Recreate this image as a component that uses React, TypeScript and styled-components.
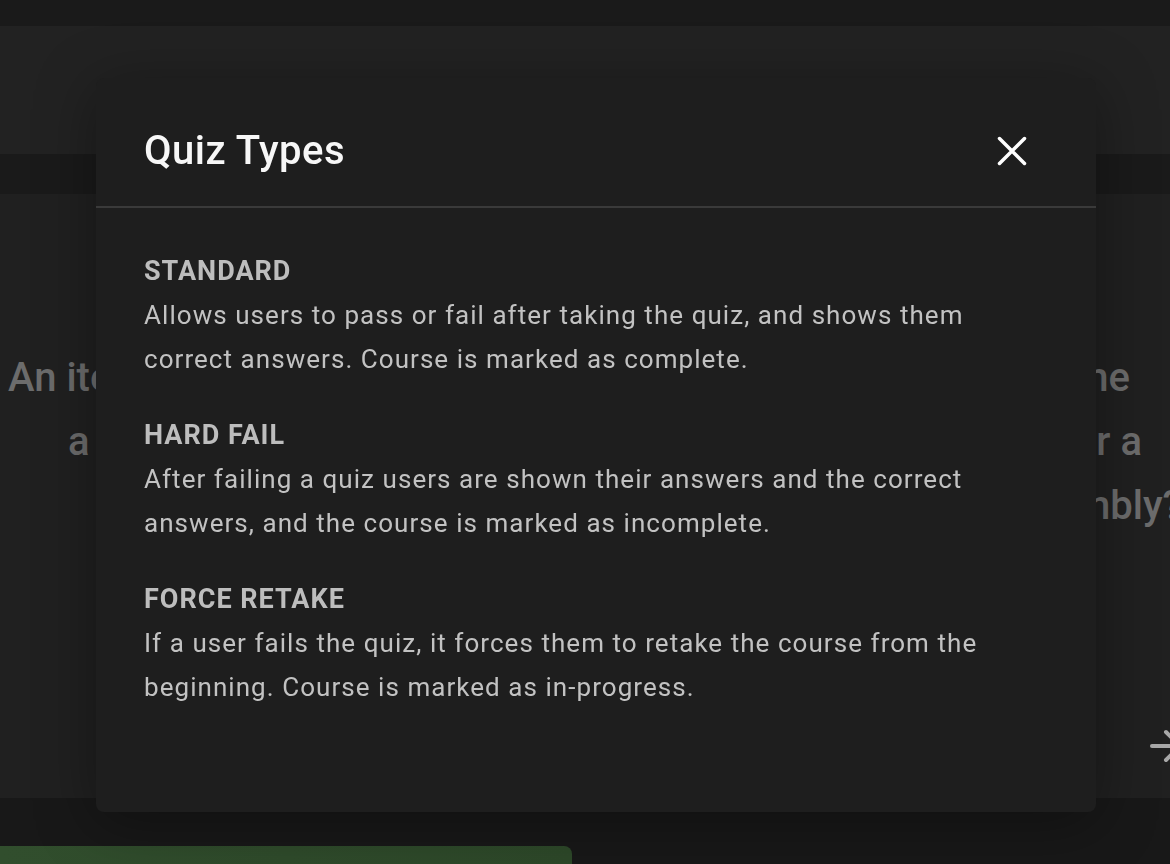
import React from "react";
import styled, { createGlobalStyle } from "styled-components";

const Global = createGlobalStyle`
  html, body {
    margin: 0;
    padding: 0;
    width: 100%;
    height: 100%;
    overflow: hidden;
    background: #1f1f1f;
  }
  body {
    font-family: Roboto, "Noto Sans", "Liberation Sans", sans-serif;
  }
  * { box-sizing: border-box; }
`;

const Page = styled.div`
  display: flex;
  flex-direction: column;
  width: 1170px;
  height: 864px;
  overflow: hidden;
`;

const TopBar = styled.div`
  height: 26px;
  background: #1a1a1a;
  flex: none;
`;

const HeaderArea = styled.div`
  height: 128px;
  background: #222222;
  flex: none;
`;

const Stripe = styled.div`
  height: 40px;
  background: #1a1a1a;
  flex: none;
`;

const Main = styled.div`
  height: 604px;
  flex: none;
  background: #202020;
  padding-top: 152px;
  display: flex;
  flex-direction: column;
`;

const QuestionLine = styled.div<{ $left: number; $right: number }>`
  display: flex;
  justify-content: space-between;
  margin-left: ${(p) => p.$left}px;
  margin-right: ${(p) => p.$right}px;
  font-size: 40px;
  font-weight: 500;
  line-height: 64px;
  color: #6c6c6c;
  white-space: nowrap;
`;

const NavRow = styled.div`
  margin-top: 184px;
  display: flex;
  justify-content: flex-end;
  margin-right: -20px;
  color: #a8a8a8;
`;

const Footer = styled.div`
  flex: 1;
  background: #181818;
  padding-top: 48px;
`;

const GreenButton = styled.div`
  width: 572px;
  height: 60px;
  background: linear-gradient(90deg, #314e2d, #2d4829);
  border-top-right-radius: 8px;
`;

const Modal = styled.div`
  position: fixed;
  left: 96px;
  top: 78px;
  width: 1000px;
  height: 734px;
  background: #1e1e1e;
  border-radius: 8px;
  box-shadow: 0 10px 60px rgba(0, 0, 0, 0.35);
  display: flex;
  flex-direction: column;
`;

const ModalHeader = styled.div`
  height: 130px;
  padding: 17px 68px 0 48px;
  display: flex;
  align-items: center;
  justify-content: space-between;
  border-bottom: 2px solid #3a3a3a;
`;

const Title = styled.h2`
  margin: 0;
  font-size: 40px;
  font-weight: 500;
  letter-spacing: 0.5px;
  color: #f7f7f7;
  line-height: 48px;
`;

const CloseButton = styled.button`
  width: 32px;
  height: 32px;
  padding: 0;
  border: none;
  background: transparent;
  display: flex;
  align-items: center;
  justify-content: center;
  cursor: pointer;
  color: #ffffff;
`;

const ModalBody = styled.div`
  padding: 41px 48px 0 48px;
  display: flex;
  flex-direction: column;
  gap: 32px;
`;

const Section = styled.div`
  display: flex;
  flex-direction: column;
`;

const SectionTitle = styled.div`
  font-size: 27px;
  font-weight: 700;
  line-height: 44px;
  letter-spacing: 1px;
  color: #bdbdbd;
`;

const SectionText = styled.div`
  font-size: 26px;
  font-weight: 400;
  line-height: 44px;
  letter-spacing: 1.05px;
  color: #c2c2c2;
  white-space: nowrap;
`;

const types = [
  {
    title: "STANDARD",
    lines: [
      "Allows users to pass or fail after taking the quiz, and shows them",
      "correct answers. Course is marked as complete.",
    ],
  },
  {
    title: "HARD FAIL",
    lines: [
      "After failing a quiz users are shown their answers and the correct",
      "answers, and the course is marked as incomplete.",
    ],
  },
  {
    title: "FORCE RETAKE",
    lines: [
      "If a user fails the quiz, it forces them to retake the course from the",
      "beginning. Course is marked as in-progress.",
    ],
  },
];

export default function App() {
  return (
    <>
      <Global />
      <Page>
        <TopBar />
        <HeaderArea />
        <Stripe />
        <Main>
          <QuestionLine $left={8} $right={40}>
            <span>An item arrives in pieces.</span>
            <span>What is the</span>
          </QuestionLine>
          <QuestionLine $left={68} $right={28}>
            <span>a required step before it is ready</span>
            <span>for a</span>
          </QuestionLine>
          <QuestionLine $left={700} $right={-12}>
            <span />
            <span>final assembly?</span>
          </QuestionLine>
          <NavRow>
            <svg
              width="48"
              height="48"
              viewBox="0 0 24 24"
              fill="none"
              stroke="currentColor"
              strokeWidth="2"
              strokeLinecap="round"
              strokeLinejoin="round"
            >
              <path d="M5 12h14" />
              <path d="m12 5 7 7-7 7" />
            </svg>
          </NavRow>
        </Main>
        <Footer>
          <GreenButton />
        </Footer>
      </Page>
      <Modal>
        <ModalHeader>
          <Title>Quiz Types</Title>
          <CloseButton aria-label="Close">
            <svg width="32" height="32" viewBox="0 0 32 32" fill="none">
              <path
                d="M3.5 3.5 L28.5 28.5 M28.5 3.5 L3.5 28.5"
                stroke="currentColor"
                strokeWidth="3.5"
                strokeLinecap="round"
              />
            </svg>
          </CloseButton>
        </ModalHeader>
        <ModalBody>
          {types.map((t) => (
            <Section key={t.title}>
              <SectionTitle>{t.title}</SectionTitle>
              {t.lines.map((l) => (
                <SectionText key={l}>{l}</SectionText>
              ))}
            </Section>
          ))}
        </ModalBody>
      </Modal>
    </>
  );
}
